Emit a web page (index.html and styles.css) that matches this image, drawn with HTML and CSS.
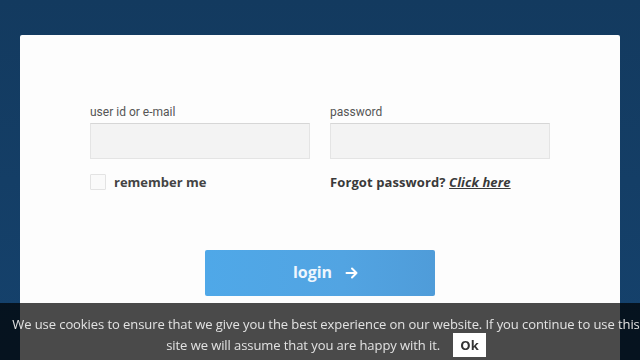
FILE: index.html
```html
<!DOCTYPE html>
<html>
<head>
<meta charset="utf-8">
<link rel="stylesheet" href="styles.css">
</head>
<body>
<main class="card">
  <form class="login-form">
    <div class="fields">
      <div class="field">
        <label class="label">user id or e-mail</label>
        <input class="input" type="text">
        <div class="remember">
          <span class="checkbox"></span>
          <span class="remember-text">remember me</span>
        </div>
      </div>
      <div class="field">
        <label class="label">password</label>
        <input class="input" type="password">
        <div class="forgot">Forgot password? <a class="click" href="#">Click here</a></div>
      </div>
    </div>
    <div class="actions">
      <button class="login-btn" type="button">login <svg class="arrow" width="14" height="14" viewBox="0 0 14 14"><path d="M1.5 7h10M7 2.5L11.5 7 7 11.5" fill="none" stroke="#fff" stroke-width="2" stroke-linecap="round" stroke-linejoin="round"/></svg></button>
    </div>
  </form>
</main>
<div class="cookie-bar">We use cookies to ensure that we give you the best experience on our website. If you continue to use this site we will assume that you are happy with it. <span class="ok">Ok</span></div>
</body>
</html>
```
FILE: styles.css
```css
html, body {
  margin: 0;
  padding: 0;
  height: 100%;
  overflow: hidden;
}
body {
  background: linear-gradient(180deg, #133a5f 0%, #15426d 100%);
  font-family: "Open Sans", "Liberation Sans", sans-serif;
}
.card {
  margin: 35px 20px 0;
  height: 325px;
  background: #fdfdfd;
  border-radius: 2px 2px 0 0;
  padding: 70px 70px 0;
  box-sizing: border-box;
}
.fields {
  display: flex;
  gap: 20px;
}
.field {
  width: 220px;
  display: flex;
  flex-direction: column;
}
.label {
  font-family: Roboto, "Liberation Sans", sans-serif;
  font-size: 12px;
  line-height: 14px;
  color: #555;
  margin-bottom: 4px;
}
.input {
  box-sizing: border-box;
  width: 220px;
  height: 36px;
  margin: 0;
  background: #f3f3f3;
  border: 1px solid #e4e4e4;
  border-top-color: #d6d6d6;
  border-radius: 0;
  outline: none;
}
.remember {
  display: flex;
  align-items: center;
  margin-top: 15px;
  height: 16px;
}
.checkbox {
  width: 14px;
  height: 14px;
  border: 1px solid #e3e3e3;
  background: #fafafa;
  border-radius: 1px;
  margin-right: 8px;
}
.remember-text {
  font-size: 13px;
  font-weight: 700;
  color: #444;
}
.forgot {
  margin-top: 15px;
  height: 16px;
  line-height: 16px;
  font-size: 13px;
  font-weight: 700;
  color: #3a3a3a;
  letter-spacing: 0.1px;
}
.click {
  font-style: italic;
  color: #3a3a3a;
  text-decoration: underline;
}
.actions {
  display: flex;
  justify-content: center;
  margin-top: 60px;
}
.login-btn {
  width: 230px;
  height: 46px;
  border: none;
  border-radius: 2px;
  background: linear-gradient(90deg, #4fa8e8 0%, #52a4e2 60%, #4f9cd9 100%);
  color: #eef6fd;
  font-family: "Open Sans", "Liberation Sans", sans-serif;
  font-size: 16px;
  font-weight: 700;
  display: flex;
  align-items: center;
  justify-content: center;
  gap: 13px;
  padding: 0 0 2px 12px;
}
.arrow {
  margin-top: 2px;
}
.cookie-bar {
  position: fixed;
  left: 0;
  bottom: 0;
  width: 630px;
  height: 45px;
  padding: 12px 0 0 11px;
  background: rgba(0, 0, 0, 0.71);
  color: #e2e2e2;
  font-size: 13px;
  line-height: 18px;
  letter-spacing: -0.08px;
  text-align: center;
}
.ok {
  display: inline-block;
  background: #fff;
  color: #333;
  font-weight: 700;
  padding: 3px 7px;
  line-height: 18px;
  margin-left: 10px;
  letter-spacing: 0;
}
```
